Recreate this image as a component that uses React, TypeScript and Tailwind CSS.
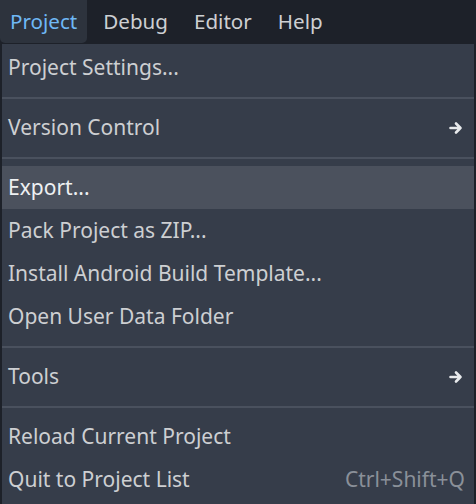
type Entry =
  | { kind: 'item'; label: string; submenu?: boolean; shortcut?: string; hover?: boolean }
  | { kind: 'sep' }

const entries: Entry[] = [
  { kind: 'item', label: 'Project Settings...' },
  { kind: 'sep' },
  { kind: 'item', label: 'Version Control', submenu: true },
  { kind: 'sep' },
  { kind: 'item', label: 'Export...', hover: true },
  { kind: 'item', label: 'Pack Project as ZIP...' },
  { kind: 'item', label: 'Install Android Build Template...' },
  { kind: 'item', label: 'Open User Data Folder' },
  { kind: 'sep' },
  { kind: 'item', label: 'Tools', submenu: true },
  { kind: 'sep' },
  { kind: 'item', label: 'Reload Current Project' },
  { kind: 'item', label: 'Quit to Project List', shortcut: 'Ctrl+Shift+Q' },
]

const menus = ['Project', 'Debug', 'Editor', 'Help']

function SubArrow() {
  return (
    <svg width="14" height="14" viewBox="0 0 14 14" className="text-[#e8eaec]">
      <path
        d="M1.5 7H11.5M7 2.5L11.5 7L7 11.5"
        fill="none"
        stroke="currentColor"
        strokeWidth="2.6"
        strokeLinecap="round"
        strokeLinejoin="round"
      />
    </svg>
  )
}

export default function App() {
  return (
    <div
      className="w-[476px] h-[504px] bg-[#1d2129] flex flex-col overflow-hidden"
      style={{ fontFamily: '"Noto Sans", sans-serif' }}
    >
      <div className="h-[44px] flex items-start shrink-0">
        {menus.map((m, i) => (
          <div
            key={m}
            className={`flex items-center h-[43px] text-[20.6px] ${
              i === 0
                ? 'bg-[#2d333d] text-[#6fb8f5] rounded-b-[5px] px-[10px] mr-[3px]'
                : 'text-[#cdcfd2] px-[13px]'
            }`}
          >
            {m}
          </div>
        ))}
      </div>

      <div className="ml-[2px] w-[472px] bg-[#363d4a] pt-[2px] pb-[3px] flex flex-col">
        {entries.map((e, i) =>
          e.kind === 'sep' ? (
            <div key={i} className="h-[17px] flex items-center">
              <div className="w-full h-[2px] bg-[#4a515e]" />
            </div>
          ) : (
            <div
              key={i}
              className={`h-[43px] flex items-center justify-between pl-[6px] pr-[9px] text-[21px] ${
                e.hover ? 'bg-[#4b515d] text-[#eef0f2]' : 'text-[#cdcfd2]'
              }`}
            >
              <span>{e.label}</span>
              {e.submenu && (
                <span className="pr-[2px]">
                  <SubArrow />
                </span>
              )}
              {e.shortcut && <span className="text-[#8a9099]">{e.shortcut}</span>}
            </div>
          ),
        )}
      </div>
    </div>
  )
}
